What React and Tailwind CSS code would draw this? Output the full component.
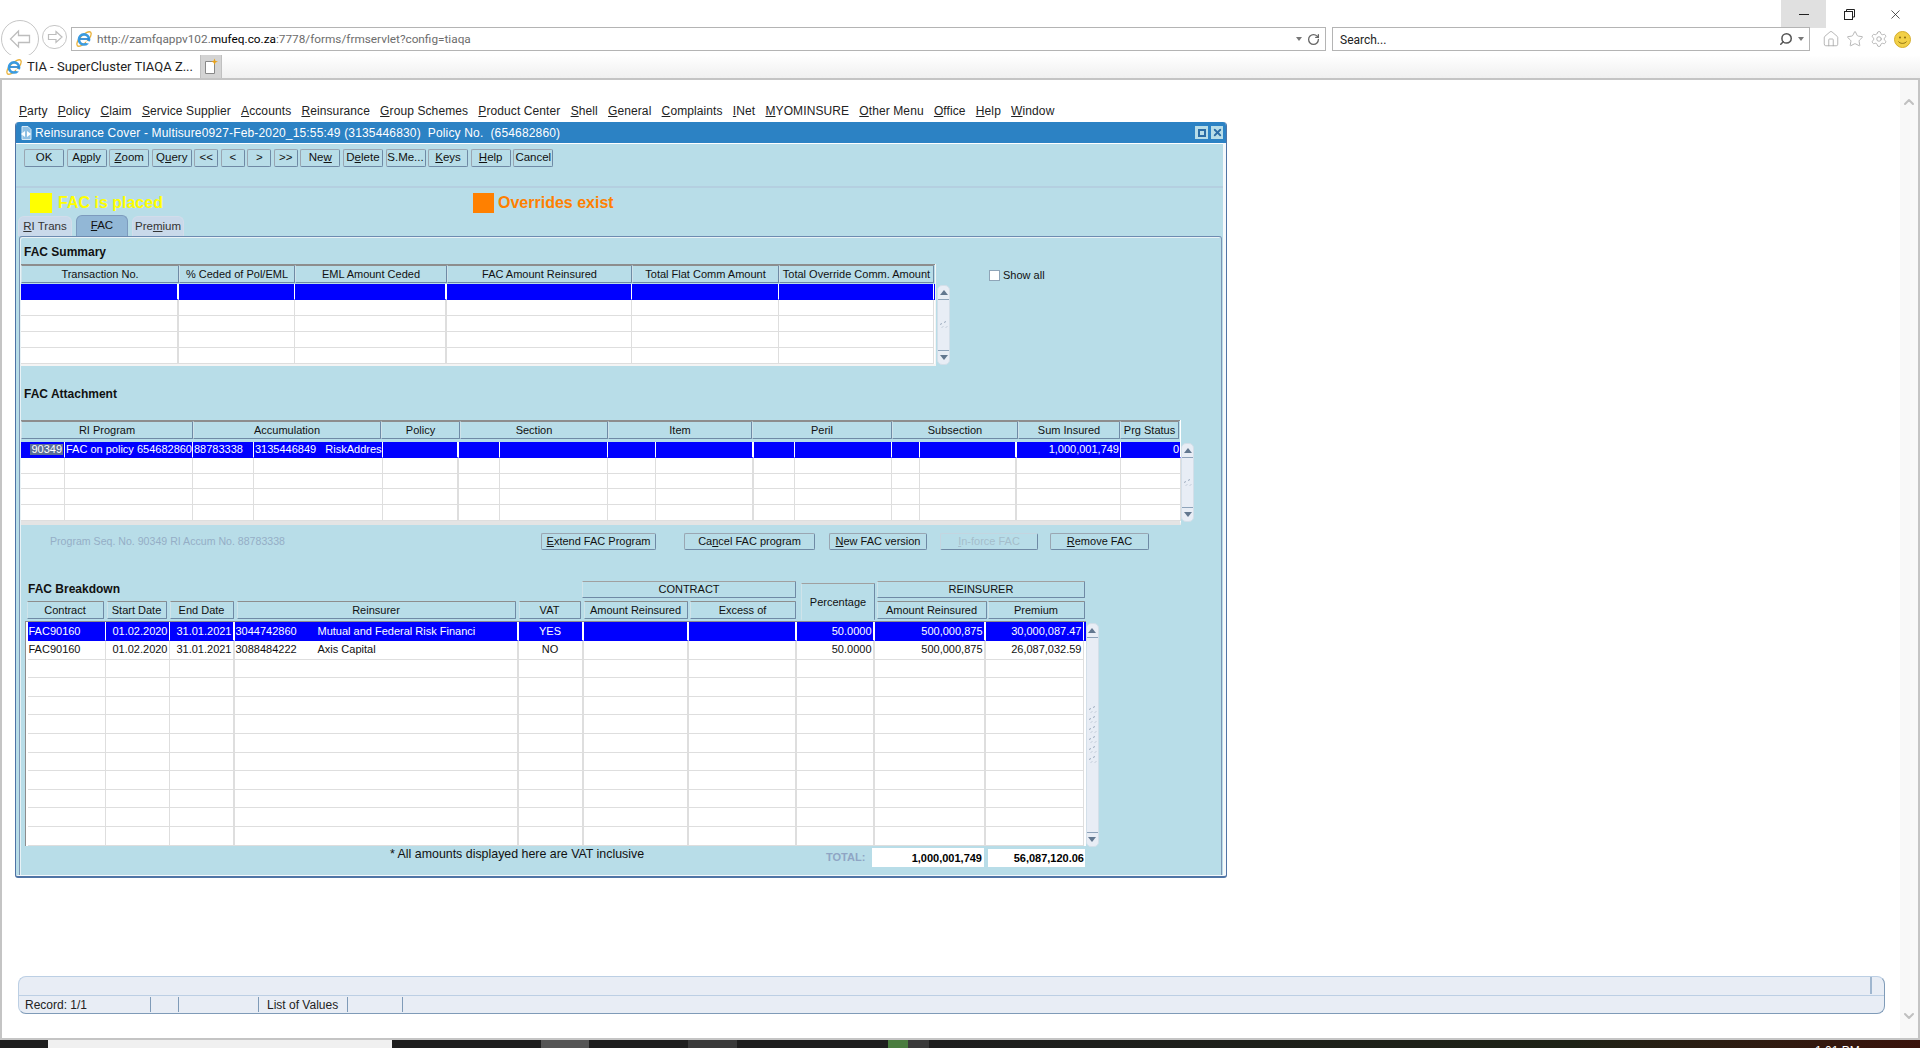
import { X, RotateCw, Search, Home, Star, Settings, ChevronUp, ChevronDown } from 'lucide-react';

function IeLogo() {
  return (
    <svg width="18" height="18" viewBox="0 0 20 20" className="shrink-0">
      <ellipse cx="10" cy="10" rx="10.5" ry="4.2" transform="rotate(-45 10 10)" fill="none" stroke="#e9b23c" strokeWidth="1.5" />
      <circle cx="10" cy="10.5" r="5.6" fill="none" stroke="#3a9be0" strokeWidth="3" />
      <path d="M5 10H16" stroke="#2f8ad2" strokeWidth="2" />
      <path d="M12.5 13.2L17.5 14.2" stroke="#ffffff" strokeWidth="2.6" />
    </svg>
  );
}

function BrowserChrome() {
  return (
    <div className="shrink-0 bg-white font-['Roboto',sans-serif]">
      <div className="flex h-[27px] justify-end">
        <div className="flex h-[28px] w-[45px] items-center justify-center bg-[#e0e0e0]"><div className="mt-px h-px w-[10px] bg-[#222]" /></div>
        <div className="flex h-[28px] w-[47px] items-center justify-center">
          <svg width="11" height="11" viewBox="0 0 11 11" fill="none" stroke="#222"><path d="M2.5 2.5V.5H10.5V8H8.5" /><rect x=".5" y="2.5" width="8" height="8" /></svg>
        </div>
        <div className="flex h-[28px] w-[47px] items-center justify-center pr-[2px]"><X className="h-[15px] w-[15px] text-[#222]" strokeWidth={1.2} /></div>
      </div>
      <div className="flex h-[28px] items-start">
        <div className="-mt-[7px] ml-px flex h-[38px] w-[38px] shrink-0 items-center justify-center rounded-full border border-[#c6c6c6]">
          <svg width="25" height="20" viewBox="0 0 24 20" fill="none" stroke="#bdbdbd" strokeWidth="1.3"><path d="M10 2L2 10L10 18V13.5H21V6.5H10Z" /></svg>
        </div>
        <div className="-mt-[2px] ml-[3px] flex h-[24px] w-[25px] shrink-0 items-center justify-center rounded-full border border-[#c6c6c6]">
          <svg width="16" height="14" viewBox="0 0 16 14" fill="none" stroke="#bdbdbd" strokeWidth="1.2"><path d="M9 1.5L15 7L9 12.5V9.5H1.5V4.5H9Z" /></svg>
        </div>
        <div className="ml-[4px] flex h-[24px] w-[1255px] shrink-0 items-center border border-[#b4b4b4] pl-[3px] pr-[5px]">
          <IeLogo />
          <span className="ml-[4px] whitespace-nowrap pt-px text-[11.8px] text-[#6d6d6d]">http://zamfqappv102.<span className="text-black">mufeq.co.za</span>:7778/forms/frmservlet?config=tiaqa</span>
          <div className="ml-auto flex items-center gap-[5px]">
            <div className="h-0 w-0 border-x-[3px] border-t-[4px] border-x-transparent border-t-[#777]" />
            <RotateCw className="h-[13px] w-[13px] text-[#666]" strokeWidth={2.4} />
          </div>
        </div>
        <div className="ml-[6px] flex h-[24px] w-[478px] shrink-0 items-center border border-[#b4b4b4] pl-[7px] pr-[5px]">
          <span className="pt-px text-[12px] text-[#222]">Search...</span>
          <div className="ml-auto flex items-center gap-[5px]">
            <Search className="h-[14px] w-[14px] -scale-x-100 text-[#555]" strokeWidth={2.6} />
            <div className="h-0 w-0 border-x-[3px] border-t-[4px] border-x-transparent border-t-[#777]" />
          </div>
        </div>
        <div className="ml-[12px] flex items-center gap-[6px] pt-[3px]">
          <Home className="h-[18px] w-[18px] text-[#a8a8a8]" strokeWidth={1.1} />
          <Star className="h-[18px] w-[18px] text-[#a8a8a8]" strokeWidth={1.1} />
          <Settings className="h-[18px] w-[18px] text-[#a8a8a8]" strokeWidth={1.1} />
          <svg width="17" height="17" viewBox="0 0 17 17"><circle cx="8.5" cy="8.5" r="8" fill="#f2d047" stroke="#d5ad2b" /><circle cx="6" cy="6.5" r="1" fill="#8a6d10" /><circle cx="11" cy="6.5" r="1" fill="#8a6d10" /><path d="M4.5 10.5C6 13 11 13 12.5 10.5" fill="none" stroke="#8a6d10" /></svg>
        </div>
      </div>
      <div className="relative z-10 flex h-[23px] bg-gradient-to-b from-white to-[#f0f0f0]">
        <div className="flex h-[23px] w-[200px] items-center overflow-hidden bg-white pl-[5px]">
          <IeLogo />
          <span className="ml-[4px] whitespace-nowrap text-[13px] text-[#222]">TIA - SuperCluster TIAQA Z...</span>
          <X className="ml-[5px] h-[12px] w-[12px] shrink-0 text-[#999]" strokeWidth={3.5} />
        </div>
        <div className="flex h-[23px] w-[22px] items-center justify-center border-x border-[#c0c0c0] bg-[#d4d4d4]">
          <svg width="15" height="17" viewBox="0 0 15 17"><path d="M1.5 3.5H10.5V15.5H1.5Z" fill="#fff" stroke="#888" /><path d="M10.5 0.5L11.5 3L14 3.5L11.5 4.5L10.5 7L9.5 4.5L7 3.5L9.5 3Z" fill="#e8a21a" /></svg>
        </div>
      </div>
      <div className="h-[2px] bg-[#c4c4c4]" />
    </div>
  );
}

function Btn({ w, children, disabled }) {
  return (
    <div className={`flex h-[17px] shrink-0 items-center justify-center rounded-[2px] border border-[#9aa6b2] border-b-[#6f8aa5] border-r-[#6f8aa5] bg-[#b8dde8] text-[11px] leading-none ${w} ${disabled ? 'text-[#a5bdcb]' : 'text-[#111]'}`}>
      {children}
    </div>
  );
}

function ToolBtn({ w, children }) {
  return (
    <div className={`flex h-[18px] shrink-0 items-center justify-center rounded-[2px] border border-[#9aa6b2] border-b-[#6f8aa5] border-r-[#6f8aa5] bg-[#b8dde8] text-[11.5px] leading-none text-[#111] ${w}`}>
      {children}
    </div>
  );
}

function HeaderCell({ children, cls = '' }) {
  return (
    <div className={`flex items-center justify-center overflow-hidden whitespace-nowrap rounded-[1px] border border-[#8d8d8d] border-b-[#6f8aa5] border-l-[#cfe3ea] border-r-[#6f8aa5] bg-[#b8dde8] text-[11px] leading-none text-[#111] ${cls}`}>
      {children}
    </div>
  );
}

function Scrollbar({ h, grips = 1, cls = '' }) {
  return (
    <div className={`flex w-[13px] shrink-0 flex-col rounded-[5px] border border-[#d3dfe9] bg-[#e8edf5] ${h} ${cls}`}>
      <div className="flex h-[14px] items-center justify-center border-b border-[#8ea3ba]">
        <div className="h-0 w-0 border-x-[4px] border-b-[5px] border-x-transparent border-b-[#62778f]" />
      </div>
      <div className="flex flex-1 flex-col items-center justify-center gap-[2px]">
        {Array.from({ length: grips }).map((_, i) => (
          <svg key={i} width="9" height="8" viewBox="0 0 9 8" fill="none" stroke="#8a9bb0" strokeWidth="0.8"><path d="M5 1.5L7 0.5M1 3.5L3 2.5M7 6.5L8 5.5M3 6.5L4 5.5" /></svg>
        ))}
      </div>
      <div className="flex h-[14px] items-center justify-center border-t border-[#8ea3ba]">
        <div className="h-0 w-0 border-x-[4px] border-t-[5px] border-x-transparent border-t-[#62778f]" />
      </div>
    </div>
  );
}

// cell text is drawn on the selected row in white, the other rows in black
function Row({ grid, cells, cols, selected, h, thick }) {
  return (
    <div className={`grid ${grid} ${h} ${selected ? 'bg-[#0000ff] text-white' : 'bg-white text-[#111]'}`}>
      {Array.from({ length: cols }).map((_, i) => {
        const c = cells ? cells[i] : null;
        const right = c && c.align === 'r';
        const center = c && c.align === 'c';
        return (
          <div
            key={i}
            className={`flex items-center overflow-hidden whitespace-nowrap border-b text-[11px] leading-none ${selected ? 'border-b-[#0000ff] border-r-white' : 'border-b-[#dedede] border-r-[#dedede]'} ${thick.includes(i) ? 'border-r-2' : 'border-r'} ${right ? 'justify-end pr-[1px]' : center ? 'justify-center' : 'pl-[1px]'}`}
          >
            {c ? c.t : ''}
          </div>
        );
      })}
    </div>
  );
}

const summaryGrid = 'grid-cols-[158px_116px_152px_185px_147px_155px]';
const attachGrid = 'grid-cols-[44px_128px_61px_129px_76px_41px_108px_48px_98px_41px_97px_28px_97px_104px_60px]';
const breakdownGrid = 'grid-cols-[78px_64px_65px_284px_65px_105px_108px_78px_111px_98px]';

const attachRow = [
  { t: <span className="bg-[#5c6f96] px-px">90349</span>, align: 'r' },
  { t: 'FAC on policy 654682860' },
  { t: '88783338' },
  { t: <span>3135446849&nbsp;&nbsp;&nbsp;RiskAddress</span> },
  null, null, null, null, null, null, null, null, null,
  { t: '1,000,001,749', align: 'r' },
  { t: '0', align: 'r' },
];

const breakdown = [
  [{ t: 'FAC90160' }, { t: '01.02.2020', align: 'r' }, { t: '31.01.2021', align: 'r' }, { t: <><span className="w-[82px]">3044742860</span><span>Mutual and Federal Risk Financi</span></> }, { t: 'YES', align: 'c' }, null, null, { t: '50.0000', align: 'r' }, { t: '500,000,875', align: 'r' }, { t: '30,000,087.47', align: 'r' }],
  [{ t: 'FAC90160' }, { t: '01.02.2020', align: 'r' }, { t: '31.01.2021', align: 'r' }, { t: <><span className="w-[82px]">3088484222</span><span>Axis Capital</span></> }, { t: 'NO', align: 'c' }, null, null, { t: '50.0000', align: 'r' }, { t: '500,000,875', align: 'r' }, { t: '26,087,032.59', align: 'r' }],
];

function Panel() {
  return (
    <div className="mx-[1px] flex h-[639px] flex-col rounded-t-[3px] border border-b-0 border-[#7b93b3] border-t-[#6d8bb0] bg-[#b8dde8] pl-[1px] shadow-[inset_1px_1px_0_#e8f2f6]">
      {/* FAC Summary */}
      <div className="ml-[3px] mt-[8px] h-[15px] text-[12px] font-bold leading-[15px] text-[#111]">FAC Summary</div>
      <div className="mt-[4px] flex items-start">
        <div className="w-[915px] shrink-0 border-b-2 border-r border-[#f4f4f4]">
          <div className={`grid h-[19px] border-t border-[#8d8d8d] ${summaryGrid}`}>
            <HeaderCell>Transaction No.</HeaderCell>
            <HeaderCell>% Ceded of Pol/EML</HeaderCell>
            <HeaderCell>EML Amount Ceded</HeaderCell>
            <HeaderCell>FAC Amount Reinsured</HeaderCell>
            <HeaderCell>Total Flat Comm Amount</HeaderCell>
            <HeaderCell>Total Override Comm. Amount</HeaderCell>
          </div>
          <Row grid={summaryGrid} cols={6} selected h="h-[16px] mt-px" thick={[0, 2]} />
          {[0, 1, 2, 3].map((i) => (
            <Row key={i} grid={summaryGrid} cols={6} h="h-[16px]" thick={[0, 2]} />
          ))}
        </div>
        <Scrollbar h="h-[80px]" cls="ml-[1px] mt-[21px]" />
        <div className="ml-[39px] mt-[5px] flex items-center">
          <div className="h-[11px] w-[11px] border border-[#8fa5b8] bg-white" />
          <span className="ml-[3px] pt-px text-[11px] leading-none text-[#111]">Show all</span>
        </div>
      </div>

      {/* FAC Attachment */}
      <div className="ml-[3px] mt-[21px] h-[15px] text-[12px] font-bold leading-[15px] text-[#111]">FAC Attachment</div>
      <div className="mt-[18px] flex items-start">
        <div className="w-[1160px] shrink-0 border-b-[4px] border-r border-[#e4e4e4] border-r-white">
          <div className="grid h-[19px] grid-cols-[172px_188px_79px_148px_144px_140px_126px_102px_59px] border-t border-[#8d8d8d]">
            <HeaderCell>RI Program</HeaderCell>
            <HeaderCell>Accumulation</HeaderCell>
            <HeaderCell>Policy</HeaderCell>
            <HeaderCell>Section</HeaderCell>
            <HeaderCell>Item</HeaderCell>
            <HeaderCell>Peril</HeaderCell>
            <HeaderCell>Subsection</HeaderCell>
            <HeaderCell>Sum Insured</HeaderCell>
            <HeaderCell>Prg Status</HeaderCell>
          </div>
          <div className="h-[3px]" />
          <Row grid={attachGrid} cols={15} cells={attachRow} selected h="h-[15.8px]" thick={[4, 8, 12]} />
          {[0, 1, 2, 3].map((i) => (
            <Row key={i} grid={attachGrid} cols={15} h="h-[15.8px]" thick={[4, 8, 12]} />
          ))}
        </div>
        <Scrollbar h="h-[79px]" cls="mt-[23px]" />
      </div>

      {/* buttons under the attachment table */}
      <div className="mt-[8px] flex items-center">
        <span className="ml-[29px] w-[491px] shrink-0 text-[10.6px] leading-none text-[#95aec6]">Program Seq. No. 90349 RI Accum No. 88783338</span>
        <Btn w="w-[115px]"><span><u>E</u>xtend FAC Program</span></Btn>
        <Btn w="ml-[28px] w-[131px]"><span>Ca<u>n</u>cel FAC program</span></Btn>
        <Btn w="ml-[14px] w-[98px]"><span><u>N</u>ew FAC version</span></Btn>
        <Btn w="ml-[13px] w-[98px] border-[#c4d5e0]" disabled><span><u>I</u>n-force FAC</span></Btn>
        <Btn w="ml-[12px] w-[99px]"><span><u>R</u>emove FAC</span></Btn>
      </div>

      {/* FAC Breakdown */}
      <div className="mt-[31.5px] flex h-[20px] items-start">
        <div className="ml-[7px] mt-[1px] w-[554px] shrink-0 text-[12px] font-bold leading-[15px] text-[#111]">FAC Breakdown</div>
        <HeaderCell cls="h-[17px] w-[214px] shrink-0 border-t-[#a0a0a0]">CONTRACT</HeaderCell>
        <HeaderCell cls="ml-[5px] mt-[2px] h-[37px] w-[74px] shrink-0 border-b-0 border-t-[#a0a0a0]">Percentage</HeaderCell>
        <HeaderCell cls="ml-[2px] h-[17px] w-[208px] shrink-0 border-t-[#a0a0a0]">REINSURER</HeaderCell>
      </div>
      <div className="ml-[5.5px] flex h-[20px] items-start">
        <HeaderCell cls="h-[18px] w-[77px]">Contract</HeaderCell>
        <HeaderCell cls="ml-[3px] h-[18px] w-[60px]">Start Date</HeaderCell>
        <HeaderCell cls="ml-[3px] h-[18px] w-[64px]">End Date</HeaderCell>
        <HeaderCell cls="ml-[3px] h-[18px] w-[279px]">Reinsurer</HeaderCell>
        <HeaderCell cls="ml-[3px] h-[18px] w-[62px]">VAT</HeaderCell>
        <HeaderCell cls="ml-[3px] h-[18px] w-[104px]">Amount Reinsured</HeaderCell>
        <HeaderCell cls="ml-[2px] h-[18px] w-[106px]">Excess of</HeaderCell>
        <div className="w-[81px] shrink-0" />
        <HeaderCell cls="h-[18px] w-[110px]">Amount Reinsured</HeaderCell>
        <HeaderCell cls="ml-[1px] h-[18px] w-[97px]">Premium</HeaderCell>
      </div>
      <div className="ml-[3.5px] flex items-start">
        <div className="w-[1061px] shrink-0 border-l border-t border-[#8d8d8d] bg-white pl-[2px]">
          {breakdown.map((cells, i) => (
            <Row key={i} grid={breakdownGrid} cols={10} cells={cells} selected={i === 0} h="h-[18.6px]" thick={[2, 3, 4, 5, 6, 7, 8]} />
          ))}
          {[0, 1, 2, 3, 4, 5, 6, 7, 8, 9].map((i) => (
            <Row key={i} grid={breakdownGrid} cols={10} h="h-[18.6px]" thick={[2, 3, 4, 5, 6, 7, 8]} />
          ))}
        </div>
        <Scrollbar h="h-[224px]" grips={6} cls="mt-[2px]" />
      </div>

      {/* totals */}
      <div className="mt-[1px] flex h-[19px] items-center">
        <span className="ml-[369px] w-[436px] shrink-0 self-start text-[12.4px] leading-none text-[#111]">* All amounts displayed here are VAT inclusive</span>
        <span className="w-[46px] shrink-0 text-[11px] font-bold leading-none text-[#8fa5c4]">TOTAL:</span>
        <div className="flex h-[19px] w-[112px] shrink-0 items-center justify-end bg-white pr-[2px] text-[11px] font-bold text-black">1,000,001,749</div>
        <div className="ml-[4px] flex h-[18px] w-[97px] shrink-0 items-center justify-end bg-white pr-px text-[11px] font-bold text-black">56,087,120.06</div>
      </div>
    </div>
  );
}

function FormWindow() {
  return (
    <div className="ml-[13px] h-[756px] w-[1212px] overflow-hidden rounded-t-[4px] rounded-b-[3px] border-x border-b-2 border-[#4f74a5] bg-[#f4f8fb] pr-[3px]">
      <div className="-mr-[3px] flex h-[21px] items-center bg-[#2c82c4] pl-[3px] pr-[3px] text-[12px] leading-none tracking-[0.16px] text-white">
        <svg width="13" height="14" viewBox="0 0 13 14" className="shrink-0">
          <path d="M3 .5H9L12 3.5V13.5H3Z" fill="#8fc0e4" stroke="#d6e9f6" />
          <path d="M6 5L2 8L6 11Z" fill="#fff" /><path d="M8 5L12 8L8 11Z" fill="#fff" />
        </svg>
        <span className="ml-[3px] pt-px">Reinsurance Cover - Multisure0927-Feb-2020_15:55:49 (3135446830)&nbsp;&nbsp;Policy No.&nbsp;&nbsp;(654682860)</span>
        <div className="ml-auto flex items-center gap-[3px]">
          <div className="flex h-[13px] w-[13px] items-center justify-center bg-[#b8dde8]"><div className="h-[8px] w-[8px] border-2 border-[#2c6da5]" /></div>
          <div className="flex h-[13px] w-[12px] items-center justify-center bg-[#b8dde8]"><X className="h-[11px] w-[11px] text-[#2c6da5]" strokeWidth={4} /></div>
        </div>
      </div>
      <div className="flex h-[43px] border-t border-white bg-[#b8dde8] pl-[8px] pt-[5px]">
        <div className="flex gap-[2.6px]">
          <ToolBtn w="w-[40px]">OK</ToolBtn>
          <ToolBtn w="w-[40px]"><span>A<u>p</u>ply</span></ToolBtn>
          <ToolBtn w="w-[40px]"><span><u>Z</u>oom</span></ToolBtn>
          <ToolBtn w="w-[40px]"><span>Q<u>u</u>ery</span></ToolBtn>
          <ToolBtn w="w-[23.9px]">&lt;&lt;</ToolBtn>
          <ToolBtn w="w-[23.9px]">&lt;</ToolBtn>
          <ToolBtn w="w-[23.9px]">&gt;</ToolBtn>
          <ToolBtn w="w-[23.9px]">&gt;&gt;</ToolBtn>
          <ToolBtn w="w-[40px]"><span>Ne<u>w</u></span></ToolBtn>
          <ToolBtn w="w-[40px]"><span>D<u>e</u>lete</span></ToolBtn>
          <ToolBtn w="w-[40px]"><span>S.Me...</span></ToolBtn>
          <ToolBtn w="w-[40px]"><span><u>K</u>eys</span></ToolBtn>
          <ToolBtn w="w-[40px]"><span><u>H</u>elp</span></ToolBtn>
          <ToolBtn w="w-[40px]"><span>Cancel</span></ToolBtn>
        </div>
      </div>
      <div className="h-[2px] bg-[#b4cfe0]" />
      <div className="h-[687px] bg-[#b8dde8] pl-[2px]">
        <div className="flex h-[28px] items-center pl-[12px] pt-[2px]">
          <div className="h-[20px] w-[22px] bg-[#ffff00]" />
          <span className="ml-[6px] w-[415px] text-[16px] font-bold leading-none text-[#ffff00]">FAC is placed</span>
          <div className="h-[20px] w-[21px] bg-[#ff8000]" />
          <span className="ml-[4px] text-[16px] font-bold leading-none text-[#ff8000]">Overrides exist</span>
        </div>
        <div className="flex h-[20px] items-end text-[11.5px] leading-none">
          <div className="flex h-[20px] w-[54px] items-center justify-center rounded-t-[6px] border-x border-t border-[#d2dcea] bg-[#c9d9ea] text-[#333]"><span><u>R</u>I Trans</span></div>
          <div className="ml-[4px] flex h-[21px] w-[52px] items-center justify-center rounded-t-[6px] border-x border-t border-[#7d9bbd] bg-[#92b7d6] text-[#111]"><span><u>F</u>AC</span></div>
          <div className="ml-[4px] flex h-[20px] w-[52px] items-center justify-center rounded-t-[6px] border-x border-t border-[#d2dcea] bg-[#c9d9ea] text-[#333]"><span>Pre<u>m</u>ium</span></div>
        </div>
        <Panel />
      </div>
    </div>
  );
}

function StatusBar() {
  return (
    <div className="ml-[16px] mt-[98px] h-[38px] w-[1867px] rounded-[8px] border border-[#bccfe4] border-b-[#7f9bb8] border-r-[#7f9bb8] bg-[#e8edf5]">
      <div className="flex h-[19px] justify-end border-b border-[#bccfe4] pr-[12px]">
        <div className="h-[17px] w-[2px] border-x border-[#9fb6cf]" />
      </div>
      <div className="flex h-[17px] items-center text-[12px] leading-none text-[#222]">
        <div className="h-[15px] w-[132px] shrink-0 border-r border-[#7f9bb8] pl-[6px] pt-[2px]">Record: 1/1</div>
        <div className="h-[15px] w-[28px] shrink-0 border-r border-[#7f9bb8]" />
        <div className="h-[15px] w-[80px] shrink-0 border-r border-[#7f9bb8]" />
        <div className="h-[15px] w-[89px] shrink-0 border-r border-[#7f9bb8] pl-[8px] pt-[2px]">List of Values</div>
        <div className="h-[15px] w-[55px] shrink-0 border-r border-[#7f9bb8]" />
      </div>
    </div>
  );
}

function Taskbar() {
  return (
    <div className="flex h-[8px] w-full overflow-hidden bg-[#1e1e1e]">
      <div className="w-[48px] shrink-0" />
      <div className="w-[344px] shrink-0 bg-[#f0f0f0]" />
      <div className="w-[149px] shrink-0" />
      <div className="w-[48px] shrink-0 bg-[#555555]" />
      <div className="w-[99px] shrink-0" />
      <div className="w-[49px] shrink-0 bg-[#3a3a3a]" />
      <div className="w-[151px] shrink-0" />
      <div className="w-[20px] shrink-0 bg-[#4a7c3f]" />
      <div className="w-[21px] shrink-0 bg-[#3a3a3a]" />
      <div className="h-full flex-1 bg-gradient-to-r from-[#1e1e1e] via-[#1e2216] via-65% to-[#3a130c]">
        <div className="ml-[886px] pt-[4px] text-[12px] leading-[14px] text-white">1:01 PM</div>
      </div>
    </div>
  );
}

export default function App() {
  return (
    <div className="flex h-[1048px] w-[1920px] flex-col overflow-hidden bg-white font-['Liberation_Sans',sans-serif]">
      <BrowserChrome />
      <div className="flex h-[960px] shrink-0 border-x-2 border-b-2 border-[#c4c4c4]">
        <div className="min-w-0 flex-1">
          <div className="flex h-[42px] items-end gap-[10.2px] pb-[5px] pl-[17px] text-[12px] leading-none tracking-[0.1px] text-[#222]">
            {[['P', 'arty'], ['P', 'olicy'], ['C', 'laim'], ['S', 'ervice Supplier'], ['A', 'ccounts'], ['R', 'einsurance'], ['G', 'roup Schemes'], ['P', 'roduct Center'], ['S', 'hell'], ['G', 'eneral'], ['C', 'omplaints'], ['I', 'Net'], ['M', 'YOMINSURE'], ['O', 'ther Menu'], ['O', 'ffice'], ['H', 'elp'], ['W', 'indow']].map(([a, b], i) => (
              <span key={i}><u>{a}</u>{b}</span>
            ))}
          </div>
          <FormWindow />
          <StatusBar />
        </div>
        <div className="flex w-[18px] shrink-0 flex-col items-center justify-between bg-[#f8f8f8] py-[14px]">
          <ChevronUp className="h-[16px] w-[16px] text-[#c0c0c0]" strokeWidth={3} />
          <ChevronDown className="h-[16px] w-[16px] text-[#c0c0c0]" strokeWidth={3} />
        </div>
      </div>
      <Taskbar />
    </div>
  );
}
